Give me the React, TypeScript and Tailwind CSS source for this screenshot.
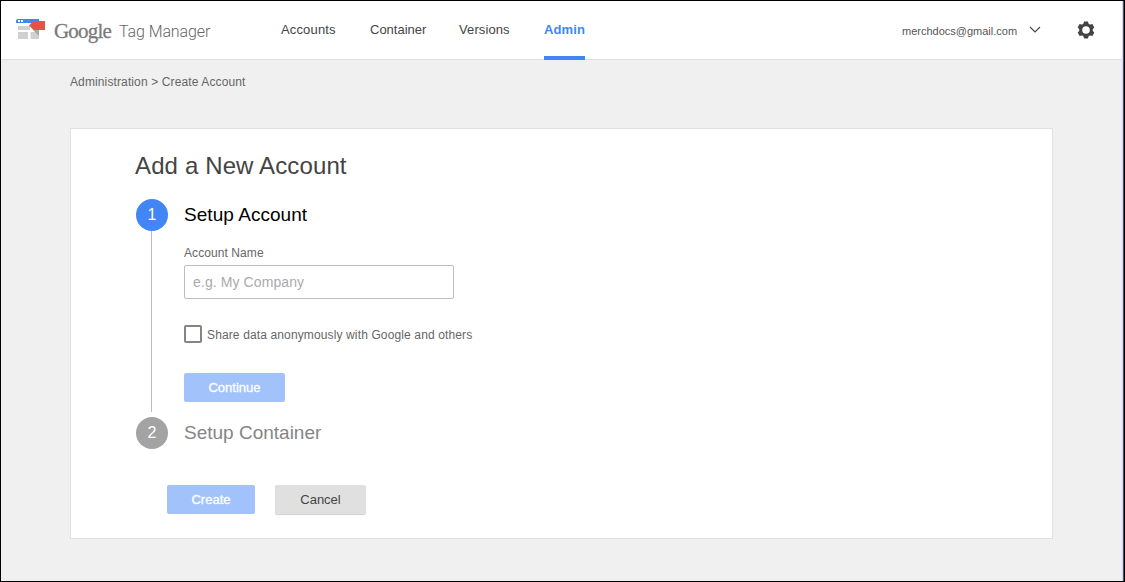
const tabs = [
  { label: "Accounts", width: "w-[55px]", gap: "mr-[34px]", spacing: "tracking-[0.15px]" },
  { label: "Container", width: "w-[56px]", gap: "mr-[33px]", spacing: "tracking-[0px]" },
  { label: "Versions", width: "w-[51px]", gap: "mr-[34px]", spacing: "tracking-[0.1px]" },
];

const teeth = [0, 60, 120, 180, 240, 300];

function Gear() {
  return (
    <svg width="18" height="18" viewBox="-9 -9 18 18" className="ml-[36px] mt-[20px]">
      <circle r="5.300" fill="none" stroke="#444" strokeWidth="3" />
      {teeth.map((a) => (
        <path key={a} d="M-2.800 -5.500L-1.900 -8.500H1.900L2.800 -5.500z" fill="#444" transform={`rotate(${a})`} />
      ))}
    </svg>
  );
}

function Logo() {
  return (
    <div className="flex h-[58px] w-[266px] items-start pl-[14px]">
      <svg width="32" height="24" viewBox="0 0 32 24" className="mt-[16px] shrink-0">
        <path d="M3 2h21v4H1V4a2 2 0 0 1 2-2z" fill="#4285f4" />
        <path d="M3 3h2v2H3zM6 3h2v2H6z" fill="#fff" />
        <path d="M3 9h12v4H3zM3 15h10v7H3zM15.500 15H24v7h-8.500z" fill="#d0d0d0" />
        <path d="M18 13h6v6z" fill="#a8a8a8" />
        <path d="M18.500 4H30v9H18.500L14 8.500z" fill="#e75246" />
      </svg>
      <span className="ml-[7px] mt-[15px] w-[65px] whitespace-nowrap font-['Liberation_Serif',serif] text-[21px] leading-[30px] tracking-[-0.8px] text-[#7a7a7a] [-webkit-text-stroke:0.3px_#7a7a7a]">Google</span>
      <span className="mt-[16px] whitespace-nowrap font-[Roboto,sans-serif] text-[16px] font-light leading-[30px] tracking-[-0.1px] text-[#666]">Tag Manager</span>
    </div>
  );
}

function Header() {
  return (
    <header className="flex h-[59px] shrink-0 border-b border-[#dcdcdc] bg-white">
      <Logo />
      <nav className="ml-[14px] flex h-[59px] text-[13px] leading-[15px] text-[#444]">
        {tabs.map((t) => (
          <a key={t.label} className={`${t.width} ${t.gap} ${t.spacing} whitespace-nowrap pt-[21px]`}>{t.label}</a>
        ))}
        <a className="w-[41px] whitespace-nowrap border-b-4 border-[#4285f4] pt-[21px] font-bold tracking-[0.1px] text-[#4285f4]">Admin</a>
      </nav>
      <div className="ml-auto flex pr-[27px]">
        <span className="mt-[23px] w-[127px] whitespace-nowrap text-[11px] leading-[14px] text-[#555]">merchdocs@gmail.com</span>
        <svg width="12" height="8" viewBox="0 0 12 8" className="mt-[25px]">
          <path d="M1 1l5 5 5-5" fill="none" stroke="#444" strokeWidth="1.100" />
        </svg>
        <Gear />
      </div>
    </header>
  );
}

export default function App() {
  return (
    <div className="h-[582px] w-[1125px] border border-black bg-black font-['Liberation_Sans',Arial,sans-serif]">
      <div className="h-full w-[1123px] border-r border-[#3e5687]">
      <div className="flex h-full flex-col border-r border-[#d8dade] bg-[#f0f0f0]">
        <Header />
        <div className="ml-[69px] mt-[14px] h-[54px] text-[12px] leading-[16px] tracking-[0.12px] text-[#666]">Administration &gt; Create Account</div>
        <main className="ml-[69px] h-[411px] w-[983px] border border-[#e0e0e0] bg-white pl-[64px] pt-[23px]">
          <h1 className="h-[47px] text-[24px] leading-[28px] tracking-[0.13px] text-[#444]">Add a New Account</h1>
          <section className="flex">
            <div className="flex w-[33px] flex-col items-center pl-px">
              <span className="flex size-8 shrink-0 items-center justify-center rounded-full bg-[#4285f4] text-[16px] leading-8 text-white">1</span>
              <span className="mr-px h-[181px] w-px bg-[#bdbdbd]" />
            </div>
            <div className="ml-[16px] flex flex-col items-start">
              <h2 className="h-[46px] pt-[5px] text-[19px] leading-[22px] tracking-[0.05px] text-black">Setup Account</h2>
              <label className="h-[20px] text-[12px] leading-[16px] tracking-[0.08px] text-[#666]">Account Name</label>
              <input placeholder="e.g. My Company" className="h-[34px] w-[270px] rounded-[2px] border border-[#bdbdbd] px-[8px] text-[14px] tracking-[0.1px] outline-none placeholder:text-[#aaa]" />
              <label className="mt-[26px] flex h-[18px] items-start text-[12px] leading-[20px] tracking-[0.13px] text-[#666]">
                <span className="mr-[5px] size-[18px] rounded-[2px] border-2 border-[#858585]" />
                Share data anonymously with Google and others
              </label>
              <button className="mt-[30px] h-[29px] w-[101px] rounded-[2px] bg-[#a2c2fc] text-[13px] text-white [-webkit-text-stroke:0.3px_white]">Continue</button>
            </div>
          </section>
          <section className="mt-[5px] flex h-[68px] items-start pl-px">
            <span className="flex size-8 items-center justify-center rounded-full bg-[#a3a3a3] text-[16px] text-white">2</span>
            <h2 className="ml-[16px] pt-[5px] text-[19px] leading-[22px] text-[#858585]">Setup Container</h2>
          </section>
          <div className="ml-[32px] flex gap-[20px] text-[13px]">
            <button className="h-[29px] w-[88px] rounded-[2px] bg-[#a2c2fc] text-white [-webkit-text-stroke:0.3px_white]">Create</button>
            <button className="h-[29px] w-[91px] rounded-[2px] bg-[#e0e0e0] text-[#444] shadow-[0_1px_1px_#d0d0d0]">Cancel</button>
          </div>
        </main>
      </div>
      </div>
    </div>
  );
}
